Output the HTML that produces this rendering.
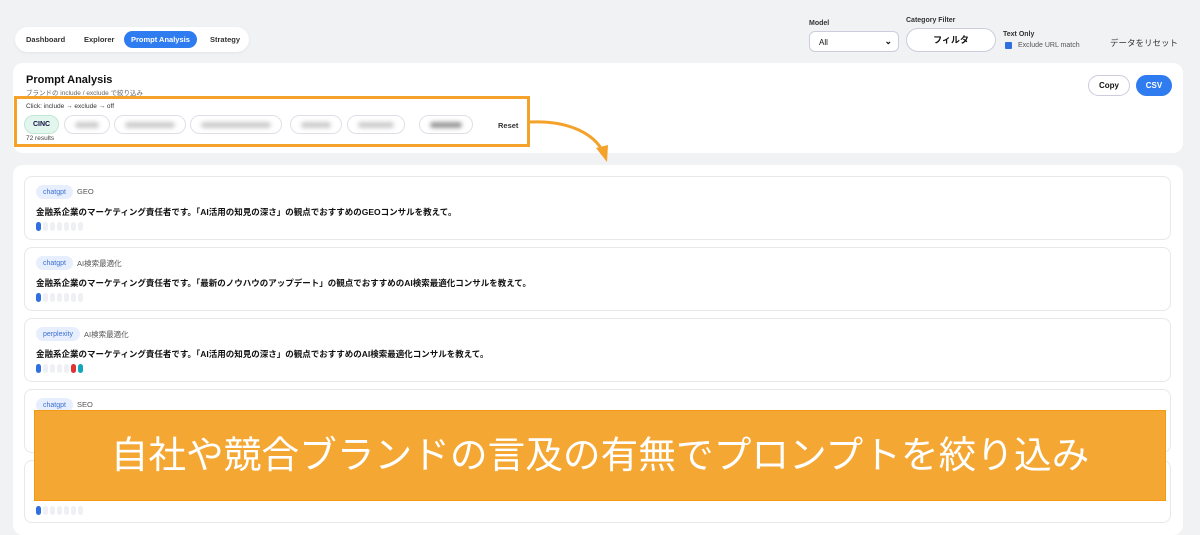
<!DOCTYPE html>
<html><head><meta charset="utf-8"><style>
*{box-sizing:border-box;margin:0;padding:0}
body{width:1200px;height:528px;overflow:hidden;background:#f1f2f4;font-family:"Liberation Sans","Noto Sans CJK JP",sans-serif;color:#111;position:relative}
.abs{position:absolute}
.nav{left:15px;top:27px;width:234px;height:25px;background:#fff;border-radius:13px;box-shadow:0 1px 3px rgba(0,0,0,.06)}
.nav span{position:absolute;top:8px;font-size:7.5px;font-weight:bold;color:#333}
.nav .act{background:#2f7bf0;color:#fff;border-radius:10px;top:4px;height:17px;display:flex;align-items:center;padding:0 7px;left:109px}
.panel{background:#fff;border-radius:10px}
.lbl{font-size:7px;font-weight:bold;color:#333}
.chip{position:absolute;top:115px;height:19px;border:1px solid #dde0e6;border-radius:10px;background:#fff}
.chip i{position:absolute;left:10px;right:10px;top:6px;height:6px;background:#ccc;filter:blur(2px);border-radius:3px}
.card{position:absolute;left:24px;width:1147px;background:#fff;border:1px solid #e6e8ec;border-radius:8px}
.tag{position:absolute;left:11px;top:8px;height:14px;display:flex;align-items:center;padding:0 7px;font-size:7px;color:#3b6fd0;background:#e7efff;border-radius:7px}
.cat{position:absolute;top:10px;font-size:7.5px;color:#555}
.q{position:absolute;left:11px;top:29px;font-size:8.5px;font-weight:bold}
.bars{position:absolute;left:11px;top:45px;height:10px}
.bars b{display:inline-block;width:5px;height:9px;border-radius:3px;background:#eef0f3;margin-right:2px;vertical-align:top}
.bars b.bl{background:#2f6fe0}.bars b.rd{background:#e03434}.bars b.cy{background:#11a7bd}
</style></head><body>
<div class="abs nav"><span style="left:11px">Dashboard</span><span style="left:69px">Explorer</span><span class="act">Prompt Analysis</span><span style="left:195px">Strategy</span></div>

<div class="abs lbl" style="left:809px;top:20px">Model</div>
<div class="abs" style="left:809px;top:31px;width:90px;height:21px;border:1px solid #ccd;border-radius:6px;background:#fff;font-size:8px;padding:6px 9px">All<span style="position:absolute;right:6px;top:4px;font-size:9px;font-weight:bold">⌄</span></div>
<div class="abs lbl" style="left:906px;top:17px">Category Filter</div>
<div class="abs" style="left:906px;top:28px;width:90px;height:24px;border:1px solid #ccd;border-radius:12px;background:#fff;font-size:9px;font-weight:bold;text-align:center;line-height:22px">フィルタ</div>
<div class="abs lbl" style="left:1003px;top:31px">Text Only</div>
<div class="abs" style="left:1005px;top:42px;width:7px;height:7px;background:#2f6fe0;border-radius:1px"></div>
<div class="abs" style="left:1018px;top:42px;font-size:7px;color:#555">Exclude URL match</div>
<div class="abs" style="left:1110px;top:37px;font-size:8.5px;color:#333">データをリセット</div>

<div class="abs panel" style="left:13px;top:63px;width:1170px;height:90px"></div>
<div class="abs" style="left:26px;top:74px;font-size:11px;font-weight:bold">Prompt Analysis</div>
<div class="abs" style="left:26px;top:87px;font-size:6.5px;color:#666">ブランドの include / exclude で絞り込み</div>
<div class="abs" style="left:1088px;top:75px;width:42px;height:21px;border:1px solid #ccd;border-radius:11px;background:#fff;font-size:8px;font-weight:bold;text-align:center;line-height:19px">Copy</div>
<div class="abs" style="left:1136px;top:75px;width:36px;height:21px;border-radius:11px;background:#2f7bf0;color:#fff;font-size:8px;font-weight:bold;text-align:center;line-height:21px">CSV</div>

<div class="abs" style="left:14px;top:96px;width:516px;height:51px;border:3px solid #f4a229"></div>
<div class="abs" style="left:26px;top:103px;font-size:6.5px;color:#333">Click: include → exclude → off</div>
<div class="chip" style="left:24px;width:35px;background:#e3f6ee;border-color:#bfe8d4;font-size:7px;font-weight:bold;color:#114;text-align:center;line-height:17px">CINC</div>
<div class="chip" style="left:64px;width:46px"><i></i></div>
<div class="chip" style="left:114px;width:72px"><i></i></div>
<div class="chip" style="left:190px;width:92px"><i></i></div>
<div class="chip" style="left:290px;width:52px"><i></i></div>
<div class="chip" style="left:347px;width:58px"><i></i></div>
<div class="chip" style="left:419px;width:54px"><i style="background:#999"></i></div>
<div class="abs" style="left:498px;top:121px;font-size:7.5px;font-weight:bold;color:#333">Reset</div>
<div class="abs" style="left:26px;top:135px;font-size:6.5px;color:#444">72 results</div>

<div class="abs panel" style="left:13px;top:165px;width:1170px;height:370px"></div>

<div class="card" style="top:176px;height:64px"><div class="tag">chatgpt</div><div class="cat" style="left:52px">GEO</div><div class="q">金融系企業のマーケティング責任者です。「AI活用の知見の深さ」の観点でおすすめのGEOコンサルを教えて。</div><div class="bars"><b class="bl"></b><b></b><b></b><b></b><b></b><b></b><b></b></div></div>
<div class="card" style="top:247px;height:64px"><div class="tag">chatgpt</div><div class="cat" style="left:52px">AI検索最適化</div><div class="q">金融系企業のマーケティング責任者です。「最新のノウハウのアップデート」の観点でおすすめのAI検索最適化コンサルを教えて。</div><div class="bars"><b class="bl"></b><b></b><b></b><b></b><b></b><b></b><b></b></div></div>
<div class="card" style="top:318px;height:64px"><div class="tag">perplexity</div><div class="cat" style="left:59px">AI検索最適化</div><div class="q">金融系企業のマーケティング責任者です。「AI活用の知見の深さ」の観点でおすすめのAI検索最適化コンサルを教えて。</div><div class="bars"><b class="bl"></b><b></b><b></b><b></b><b></b><b class="rd"></b><b class="cy"></b></div></div>
<div class="card" style="top:389px;height:64px"><div class="tag">chatgpt</div><div class="cat" style="left:52px">SEO</div></div>
<div class="card" style="top:460px;height:63px"><div class="bars" style="top:45px"><b class="bl"></b><b></b><b></b><b></b><b></b><b></b><b></b></div></div>

<div class="abs" style="left:34px;top:410px;width:1132px;height:91px;background:#f4a733;border:1px solid #f59a10;color:#fff;font-size:37.7px;text-align:center;line-height:88px">自社や競合ブランドの言及の有無でプロンプトを絞り込み</div>

<svg class="abs" style="left:0;top:0" width="1200" height="528"><path d="M530 122 C570 120 595 135 603 152" fill="none" stroke="#f4a229" stroke-width="3"/><path d="M596 148 L607 162 L608 145 Z" fill="#f4a229"/></svg>
</body></html>
